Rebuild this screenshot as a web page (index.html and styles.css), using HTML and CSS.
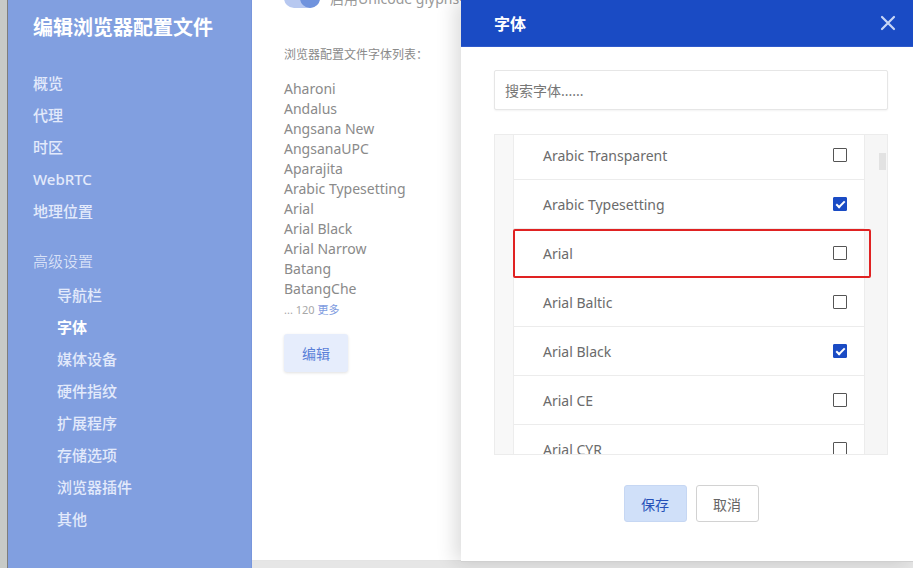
FILE: index.html
```html
<!DOCTYPE html>
<html lang="zh-CN">
<head>
  <meta charset="UTF-8">
  <title>编辑浏览器配置文件</title>
  <link rel="stylesheet" href="styles.css">
</head>
<body>
  <div class="edge"></div>
  <div class="app">
    <aside class="sidebar">
      <h1>编辑浏览器配置文件</h1>
      <nav class="nav">
        <a>概览</a>
        <a>代理</a>
        <a>时区</a>
        <a>WebRTC</a>
        <a>地理位置</a>
      </nav>
      <div class="group">高级设置</div>
      <nav class="nav sub">
        <a>导航栏</a>
        <a class="active">字体</a>
        <a>媒体设备</a>
        <a>硬件指纹</a>
        <a>扩展程序</a>
        <a>存储选项</a>
        <a>浏览器插件</a>
        <a>其他</a>
      </nav>
    </aside>

    <main class="main">
      <div class="toggle-row">
        <span class="toggle"><span class="knob"></span></span>
        <span class="toggle-label">启用Unicode glyphs字体</span>
      </div>
      <div class="caption">浏览器配置文件字体列表：</div>
      <ul class="font-list">
        <li>Aharoni</li>
        <li>Andalus</li>
        <li>Angsana New</li>
        <li>AngsanaUPC</li>
        <li>Aparajita</li>
        <li>Arabic Typesetting</li>
        <li>Arial</li>
        <li>Arial Black</li>
        <li>Arial Narrow</li>
        <li>Batang</li>
        <li>BatangChe</li>
      </ul>
      <div class="more">... 120 <a>更多</a></div>
      <button class="btn-edit">编辑</button>
    </main>

    <div class="modal">
      <div class="modal-head">
        <span class="modal-title">字体</span>
        <svg class="close" width="16" height="16" viewBox="0 0 16 16">
          <path d="M2 2 L14 14 M14 2 L2 14" stroke="currentColor" stroke-width="2.2" stroke-linecap="round"/>
        </svg>
      </div>
      <div class="modal-body">
        <input class="search" type="text" placeholder="搜索字体......">
        <div class="list-box">
          <div class="gutter"></div>
          <div class="rows">
            <div class="row first"><span>Arabic Transparent</span><i class="cb"></i></div>
            <div class="row"><span>Arabic Typesetting</span><i class="cb on"></i></div>
            <div class="row"><span>Arial</span><i class="cb"></i></div>
            <div class="row"><span>Arial Baltic</span><i class="cb"></i></div>
            <div class="row"><span>Arial Black</span><i class="cb on"></i></div>
            <div class="row"><span>Arial CE</span><i class="cb"></i></div>
            <div class="row"><span>Arial CYR</span><i class="cb"></i></div>
          </div>
          <div class="scrollbar"><span class="thumb"></span></div>
          <div class="mark"></div>
        </div>
        <div class="actions">
          <button class="btn-save">保存</button>
          <button class="btn-cancel">取消</button>
        </div>
      </div>
    </div>
  </div>
</body>
</html>
```

FILE: styles.css
```css
body { margin: 0; height: 568px; overflow: hidden; display: flex; background: #e6e6e6; font-family: "Noto Sans", "Noto Sans CJK SC", sans-serif; }
.edge { width: 7px; background: #c7cac7; border-right: 1px solid #7d7d7d; }
.app { flex: 1; display: flex; position: relative; }

.sidebar { width: 244px; height: 568px; background: #819fe0; padding: 14px 0 0 25px; box-sizing: border-box; border-right: 1px solid #7896dc; }
.sidebar h1 { margin: 0 0 25px; font-size: 20px; font-weight: bold; color: #fff; line-height: 28px; }
.nav a { display: block; height: 32px; line-height: 32px; font-size: 15px; color: #e3eafb; font-weight: 500; }
.group { margin-top: 18px; height: 32px; line-height: 32px; font-size: 15px; color: #e8eefc; font-weight: 300; }
.nav.sub { margin-top: 2px; padding-left: 24px; }
.nav a.active { color: #fff; font-weight: bold; }

.main { flex: 1; height: 561px; background: #fff; padding-left: 32px; border-bottom: 1px solid #e4e4e4; box-sizing: border-box; }
.toggle-row { display: flex; align-items: center; height: 12px; margin-top: -8px; }
.toggle { width: 36px; height: 20px; border-radius: 10px; background: #b7c8f0; position: relative; margin-right: 10px; }
.knob { position: absolute; right: 0; top: 0; width: 20px; height: 20px; border-radius: 50%; background: #7093dd; }
.toggle-label { font-size: 14px; color: #999; }
.caption { margin-top: 42px; font-size: 12px; color: #8a8a8a; line-height: 18px; }
.font-list { list-style: none; margin: 15px 0 0; padding: 0; }
.font-list li { height: 20px; line-height: 20px; font-size: 14px; color: #8a8a8a; }
.more { margin-top: 3px; font-size: 11px; color: #a8a8a8; line-height: 16px; }
.more a { color: #7e9be0; }
.btn-edit { margin-top: 16px; width: 64px; height: 38px; border: none; border-radius: 3px; background: #e6edfc; color: #5a7fd8; font-size: 14px; font-family: inherit; box-shadow: 0 1px 3px rgba(0,0,0,0.12); }

.modal { position: absolute; top: 0; right: 0; width: 452px; height: 561px; background: #fff; box-shadow: -6px 0 18px rgba(0,0,0,0.14); border-bottom: 1px solid #d0d0d0; }
.modal-head { height: 46px; background: #1a4bc4; display: flex; align-items: center; justify-content: space-between; padding: 0 17px 0 33px; border-bottom: 1px solid #2f5acb; }
.modal-title { font-size: 16px; font-weight: bold; color: #fff; }
.close { color: #c8d6f6; }
.modal-body { padding: 23px 25px 0 33px; }
.search { display: block; width: 100%; height: 40px; box-sizing: border-box; border: 1px solid #e6e6e6; border-radius: 2px; padding: 0 10px; font-size: 14px; font-family: inherit; box-shadow: 0 1px 2px rgba(0,0,0,0.05); }
.search::placeholder { color: #777; }

.list-box { margin-top: 24px; height: 321px; border: 1px solid #ececec; display: flex; position: relative; box-sizing: border-box; }
.gutter { width: 18px; background: #f8f8f8; border-right: 1px solid #ededed; }
.rows { width: 350px; overflow: hidden; }
.row { height: 48px; border-bottom: 1px solid #ececec; display: flex; align-items: center; justify-content: space-between; padding: 0 17px 0 29px; font-size: 14px; color: #6b6b6b; }
.row.first { margin-top: -4px; }
.cb { width: 12px; height: 12px; border: 1.5px solid #555; border-radius: 1px; position: relative; }
.cb.on { background: #1a4bc4; border-color: #1a4bc4; }
.cb.on::after { content: ""; position: absolute; left: 4px; top: 1px; width: 3px; height: 7px; border: solid #fff; border-width: 0 2px 2px 0; transform: rotate(45deg); }
.scrollbar { flex: 1; background: #f6f6f6; border-left: 1px solid #ececec; position: relative; }
.thumb { position: absolute; right: 1px; top: 18px; width: 7px; height: 17px; background: #e2e2e2; }
.mark { position: absolute; left: 18px; top: 94px; width: 358px; height: 49px; border: 2px solid #e02222; border-radius: 2px; box-sizing: border-box; }

.actions { display: flex; justify-content: center; gap: 9px; margin-top: 30px; }
.actions button { width: 63px; height: 37px; border-radius: 3px; font-size: 14px; font-family: inherit; }
.btn-save { background: #d0e0f9; color: #2650b8; border: 1px solid #c6d7f3; }
.btn-cancel { background: #fff; color: #666; border: 1px solid #d2d2d2; }
```
